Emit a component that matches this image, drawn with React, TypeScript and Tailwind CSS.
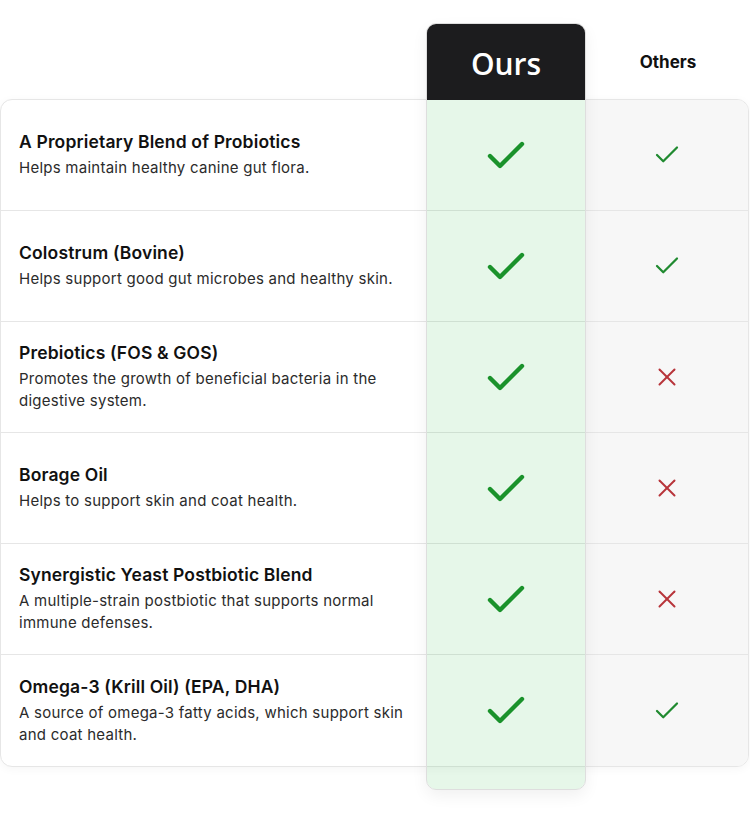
import React from 'react';
import { Check, X } from 'lucide-react';

const rows = [
    { title: 'A Proprietary Blend of Probiotics', desc: 'Helps maintain healthy canine gut flora.', others: true },
    { title: 'Colostrum (Bovine)', desc: 'Helps support good gut microbes and healthy skin.', others: true },
    { title: 'Prebiotics (FOS & GOS)', desc: 'Promotes the growth of beneficial bacteria in the digestive system.', others: false },
    { title: 'Borage Oil', desc: 'Helps to support skin and coat health.', others: false },
    { title: 'Synergistic Yeast Postbiotic Blend', desc: 'A multiple-strain postbiotic that supports normal immune defenses.', others: false },
    { title: 'Omega-3 (Krill Oil) (EPA, DHA)', desc: 'A source of omega-3 fatty acids, which support skin and coat health.', others: true },
];

export default function App() {
    return (
        <main className="min-h-screen bg-white font-['Inter','Liberation_Sans',sans-serif] text-[#111]">
            <div className="relative w-[750px] pt-[23px]">
                {/* header row */}
                <div className="grid grid-cols-[426px_160px_1fr] h-[76px]">
                    <div />
                    <div />
                    <div className="flex items-center justify-center pt-[3px] text-[17px] font-bold">Others</div>
                </div>

                {/* table card */}
                <div className="relative z-0 mr-[1px] rounded-[12px] border border-[#e6e6e6] bg-white shadow-[0_2px_10px_rgba(0,0,0,0.04)] overflow-hidden">
                    {rows.map((row, i) => (
                        <div
                            key={i}
                            className={`grid grid-cols-[425px_160px_1fr] h-[111px] ${i < rows.length - 1 ? 'border-b border-[#e6e6e6]' : 'h-[109px]'}`}
                        >
                            <div className="flex flex-col justify-center gap-[3px] pl-[18px] pr-[12px] pb-[1px]">
                                <div className="text-[17.5px] leading-[24px] font-semibold tracking-[0.15px]">{row.title}</div>
                                <div className="text-[15px] leading-[22px] tracking-[0.25px] text-[#2b2b2b]">{row.desc}</div>
                            </div>
                            <div className="flex items-center justify-center">
                                <Check size={48} strokeWidth={2.2} className="text-[#1c8f2c] mt-[1px]" />
                            </div>
                            <div className="flex items-center justify-center bg-[#f7f7f7]">
                                {row.others ? (
                                    <Check size={30} strokeWidth={1.8} className="text-[#208a30]" />
                                ) : (
                                    <X size={30} strokeWidth={1.6} className="text-[#b8343a]" />
                                )}
                            </div>
                        </div>
                    ))}
                </div>

                {/* highlighted "Ours" column, raised over the card */}
                <div className="pointer-events-none absolute left-[426px] top-[23px] z-10 flex w-[160px] h-[767px] flex-col rounded-[10px] border border-[#dedede] shadow-[0_6px_16px_rgba(0,0,0,0.06)] overflow-hidden">
                    <div className="flex h-[76px] items-center justify-center bg-[#1c1c1e] text-white text-[30px] font-semibold font-['Open_Sans',sans-serif] pt-[2px]">
                        Ours
                    </div>
                    <div className="flex-1 bg-[rgba(5,175,35,0.1)]" />
                </div>
            </div>
        </main>
    );
}
